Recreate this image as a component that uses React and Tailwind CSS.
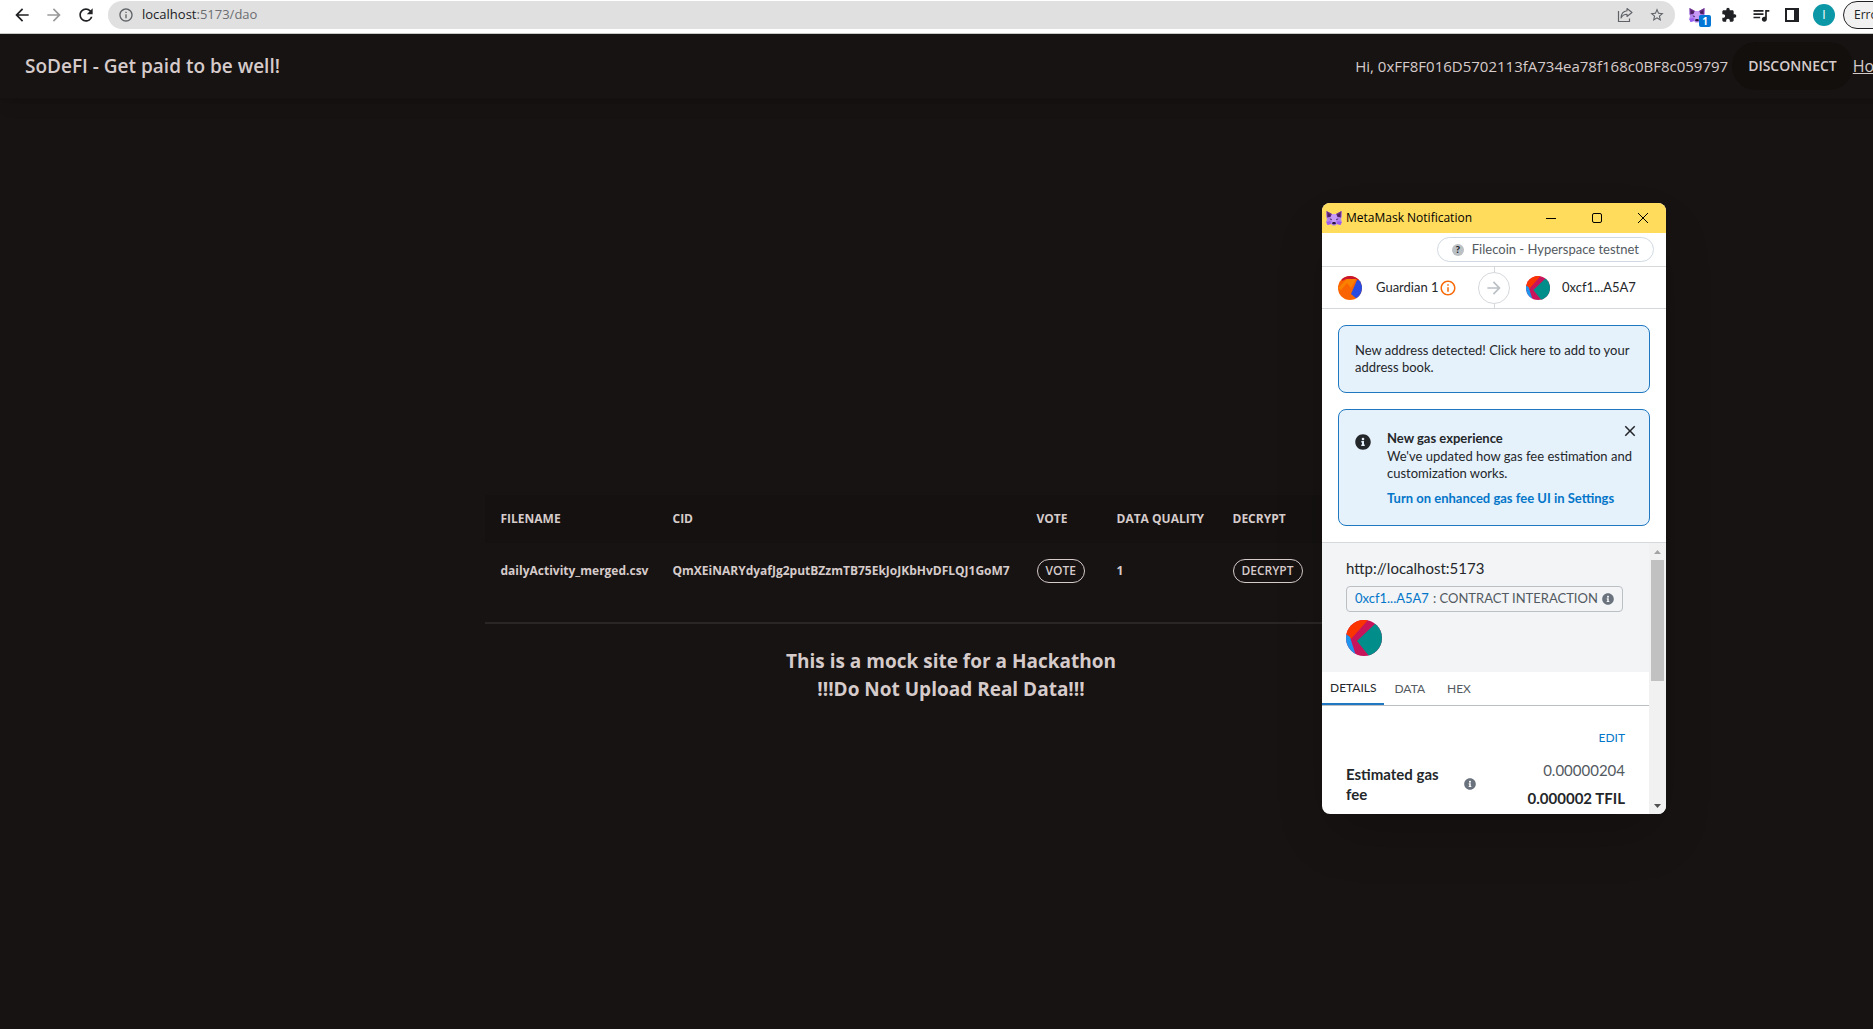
import {
  MdArrowBack,
  MdArrowForward,
  MdRefresh,
  MdInfoOutline,
  MdStarBorder,
  MdExtension,
  MdQueueMusic,
  MdClose,
} from "react-icons/md";
import { FaInfoCircle } from "react-icons/fa";

const files = [
  {
    name: "dailyActivity_merged.csv",
    cid: "QmXEiNARYdyafJg2putBZzmTB75EkJoJKbHvDFLQJ1GoM7",
    quality: 1,
  },
];

const FoxIcon = ({ className }) => (
  <svg viewBox="0 0 16 16" className={className} aria-hidden="true">
    <path d="M.5 1 6 4h4l5.500-3 .3 6-.8 2 .8 3-1.300 3-3.500-1-1.500 1.500h-3L5 14l-3.500 1L.2 12 1 9 .2 7z" fill="#b184ee" />
    <path d="M.5 1 6 4 4.500 7 1 7.500zM15.500 1 10 4l1.500 3 3.500.5z" fill="#6b2f86" />
    <path d="M2 3.500 5 5 4 6.500 2 7zM14 3.500 11 5l1 1.500 2 .5z" fill="#4a1f5e" />
    <path d="M6 4h4l1.500 4-2 4h-3l-2-4z" fill="#c79af6" />
    <path d="M.2 12 4.500 11 5 14l-3.500 1zM15.800 12l-4.300-1-.5 3 3.500 1z" fill="#9a5cf0" />
    <path d="M3.500 8.500 6 9l-.8 1.200zM12.500 8.500 10 9l.8 1.200z" fill="#3a1a50" />
    <path d="M6 13.500 6.800 12h2.400l.8 1.500-1 .8H7z" fill="#2c1640" />
  </svg>
);

const GuardianAvatar = ({ className }) => (
  <svg viewBox="0 0 24 24" className={className} aria-hidden="true">
    <clipPath id="guardian-clip">
      <circle cx="12" cy="12" r="12" />
    </clipPath>
    <g clipPath="url(#guardian-clip)">
      <path d="M0 0h24v24H0z" fill="#fa6400" />
      <path d="M0 12 9 3l9 0-5 9-4-5-6 7z" fill="#fa8000" />
      <path d="M3 0h18v5l-3-2H8L4 5z" fill="#c8142f" />
      <path d="M19 4l6 1v19h-5l-7-6z" fill="#2a4be0" />
    </g>
  </svg>
);

const ContractAvatar = ({ id, className }) => (
  <svg viewBox="0 0 36 36" className={className} aria-hidden="true">
    <clipPath id={id}>
      <circle cx="18" cy="18" r="18" />
    </clipPath>
    <g clipPath={`url(#${id})`}>
      <path d="M0 0h36v36H0z" fill="#c8145b" />
      <path d="M0 0h22L5 19 0 14z" fill="#fb3500" />
      <path d="M0 14l4 3 6 19H0z" fill="#1e96f0" />
      <path d="M30 3 11 21l12 15h13V3z" fill="#018e8b" />
    </g>
  </svg>
);

const BrowserBar = () => (
  <div className="flex h-[34px] shrink-0 items-start overflow-hidden border-b border-[#c9cbc7] bg-white pl-3 pt-px text-[#202124]">
    <div className="flex h-7 items-center gap-3">
      <button aria-label="Back">
        <MdArrowBack className="size-5" />
      </button>
      <button aria-label="Forward" className="text-[#9a9a9a]">
        <MdArrowForward className="size-5" />
      </button>
      <button aria-label="Reload">
        <MdRefresh className="size-5" />
      </button>
    </div>
    <div className="ml-3 flex h-7 flex-1 items-center gap-2 rounded-full bg-[#e0e0e0] pl-2.5 pr-2.5">
      <MdInfoOutline className="size-4 text-[#5f6368]" />
      <span className="flex-1 text-[13px] text-[#6b6e72]">
        <span className="text-[#202124]">localhost</span>:5173/dao
      </span>
      <button aria-label="Share">
        <svg viewBox="0 0 16 16" className="size-4 fill-none stroke-[#5f6368]">
          <path d="M1.500 4v10.500h11v-3" strokeWidth="1.200" />
          <path d="M10 1.500l5 4-5 4V7.300C7 7.300 5.300 8.500 4 11c.2-4 2.500-6.800 6-7.200z" strokeWidth="1.100" strokeLinejoin="round" />
        </svg>
      </button>
      <button aria-label="Bookmark" className="ml-2">
        <MdStarBorder className="size-4 text-[#5f6368]" />
      </button>
    </div>
    <div className="flex h-7 w-[198px] shrink-0 items-center gap-4 pl-3.5">
      <button aria-label="MetaMask" className="relative">
        <FoxIcon className="size-4" />
        <span className="absolute -right-1.5 top-2 flex size-3 items-center justify-center rounded-xs bg-[#0376d6] text-[10px] font-bold text-white">
          1
        </span>
      </button>
      <button aria-label="Extensions">
        <MdExtension className="size-4" />
      </button>
      <button aria-label="Media">
        <MdQueueMusic className="-mx-0.5 size-5" />
      </button>
      <button aria-label="Side panel">
        <svg viewBox="0 0 14 14" className="size-3.5">
          <path d="M0 0h14v14H0zM2 2v10h7V2z" fill="#202124" fillRule="evenodd" />
        </svg>
      </button>
      <button className="-ml-0.5 flex size-[22px] shrink-0 items-center justify-center rounded-full bg-[#0b97a5] text-xs text-white">
        I
      </button>
      <button className="-ml-2 h-7 shrink-0 rounded-full border border-[#202124] bg-[#f1f1f1] px-2.5 text-xs">
        Error
      </button>
    </div>
  </div>
);

const Navbar = () => (
  <header className="flex h-16 w-[calc(100%+29px)] shrink-0 items-center pl-[25px] pr-1 shadow-lg">
    <h1 className="flex-1 text-[19px] font-semibold">SoDeFI - Get paid to be well!</h1>
    <span className="text-[15px]">Hi, 0xFF8F016D5702113fA734ea78f168c0BF8c059797</span>
    <button className="ml-1 h-12 rounded-full bg-[#120f0d] px-4 text-sm font-semibold">
      DISCONNECT
    </button>
    <a href="#home" className="text-base underline">
      Home
    </a>
  </header>
);

const FileTable = () => (
  <table className="w-[933px] table-fixed text-left text-xs font-bold">
    <colgroup>
      <col className="w-[172px]" />
      <col className="w-[364px]" />
      <col className="w-20" />
      <col className="w-[116px]" />
      <col className="w-[100px]" />
      <col />
    </colgroup>
    <thead>
      <tr className="h-12 bg-[#141110]">
        <th className="px-4">FILENAME</th>
        <th className="px-4">CID</th>
        <th className="px-4">VOTE</th>
        <th className="whitespace-nowrap px-4">DATA QUALITY</th>
        <th className="px-4">DECRYPT</th>
        <th></th>
      </tr>
    </thead>
    <tbody>
      {files.map((file) => (
        <tr key={file.cid} className="h-14">
          <td className="px-4">{file.name}</td>
          <td className="px-4">{file.cid}</td>
          <td className="px-4">
            <button className="block h-6 rounded-full border border-[#d6cbcb] px-2 font-semibold">VOTE</button>
          </td>
          <td className="px-4">{file.quality}</td>
          <td className="px-4">
            <button className="block h-6 rounded-full border border-[#d6cbcb] px-2 font-semibold">DECRYPT</button>
          </td>
          <td></td>
        </tr>
      ))}
    </tbody>
  </table>
);

const TitleBar = () => (
  <div className="flex h-[30px] items-center bg-[#ffdc5c] pl-1 pr-[18px] text-black">
    <FoxIcon className="size-4" />
    <span className="ml-1 flex-1 font-['Open_Sans',sans-serif] text-xs">MetaMask Notification</span>
    <div className="flex items-center gap-9">
      <button aria-label="Minimize">
        <svg viewBox="0 0 10 10" className="size-2.5 stroke-black">
          <path d="M0 5.500h10" />
        </svg>
      </button>
      <button aria-label="Maximize">
        <svg viewBox="0 0 10 10" className="size-2.5 fill-none stroke-black">
          <rect x="0.500" y="0.500" width="9" height="9" rx="1.500" />
        </svg>
      </button>
      <button aria-label="Close">
        <svg viewBox="0 0 10 10" className="size-2.5 stroke-black">
          <path d="M0 0l10 10M10 0L0 10" />
        </svg>
      </button>
    </div>
  </div>
);

const Accounts = () => (
  <div className="relative flex h-[43px] items-center border-y border-[#d6d9dc] text-[13px]">
    <div className="flex w-1/2 items-center pl-4">
      <GuardianAvatar className="size-6" />
      <span className="ml-3.5">Guardian 1</span>
      <MdInfoOutline className="size-[18px] text-[#f66a0a]" />
    </div>
    <div className="flex w-1/2 items-center pl-8">
      <ContractAvatar id="recipient-clip" className="size-6" />
      <span className="ml-3">0xcf1...A5A7</span>
    </div>
    <div className="absolute inset-y-0 left-1/2 flex w-8 -translate-x-1/2 items-center justify-center">
      <span className="absolute inset-y-0 left-1/2 w-px bg-[#d6d9dc]" />
      <span className="relative flex size-8 items-center justify-center rounded-full border border-[#d6d9dc] bg-white">
        <MdArrowForward className="size-5 stroke-[#bbc0c5] text-[#bbc0c5]" />
      </span>
    </div>
  </div>
);

const MetaMaskWindow = () => (
  <section className="absolute right-[207px] top-[203px] w-[344px] overflow-hidden rounded-lg bg-white font-[Lato,sans-serif] text-[#24272a] shadow-2xl">
    <TitleBar />
    <div className="flex h-[33px] items-center justify-end pr-3">
      <button className="flex h-[25px] items-center gap-2 rounded-full border border-[#d0d9e2] px-3.5 text-[13px] text-[#535a61]">
        <span className="flex size-3 items-center justify-center rounded-full bg-[#bbc0c5] text-[10px] font-black text-[#24272a]">
          ?
        </span>
        Filecoin - Hyperspace testnet
      </button>
    </div>
    <Accounts />

    <div className="space-y-4 p-4">
      <div className="rounded-lg border border-[#1f78c1] bg-[#e5f1fb] p-4 text-[13px] leading-[17px]">
        New address detected! Click here to add to your address book.
      </div>
      <div className="relative flex rounded-lg border border-[#1f78c1] bg-[#e5f1fb] px-4 py-[18px] text-[13px] leading-[17px]">
        <FaInfoCircle className="mt-1.5 size-4 shrink-0" />
        <div className="ml-4 flex-1">
          <h2 className="font-bold leading-5">New gas experience</h2>
          <p>We've updated how gas fee estimation and customization works.</p>
          <a href="#settings" className="mt-2 block font-bold text-[#0376c9]">
            Turn on enhanced gas fee UI in Settings
          </a>
        </div>
        <button aria-label="Dismiss" className="absolute right-2.5 top-3">
          <MdClose className="size-[18px] stroke-current" />
        </button>
      </div>
    </div>

    <div className="flex h-[272px] border-t border-[#d6d9dc]">
      <div className="min-w-0 flex-1 overflow-hidden">
        <div className="bg-[#f2f4f6] px-6 pb-4 pt-[15px]">
          <div className="text-[15px] leading-5">http://localhost:5173</div>
          <div className="mt-2 inline-flex h-[26px] items-center rounded border border-[#bbc0c5] px-2 text-[13px] text-[#535a61]">
            <span className="text-[#0376c9]">0xcf1...A5A7</span>
            <span className="ml-1">: CONTRACT INTERACTION</span>
            <FaInfoCircle className="ml-1 size-3 text-[#6a737d]" />
          </div>
          <ContractAvatar id="contract-clip" className="mt-2 size-9" />
        </div>
        <div className="flex h-[34px] border-b border-[#bbc0c5] text-xs text-[#535a61]">
          <button className="border-b-2 border-[#1f78c1] px-2 text-[#24272a]">DETAILS</button>
          <button className="px-2.5">DATA</button>
          <button className="px-3">HEX</button>
        </div>
        <div className="px-6 pt-6">
          <button className="ml-auto block text-xs text-[#0376c9]">EDIT</button>
          <div className="mt-2.5 flex items-center">
            <h3 className="w-28 text-[15px] font-bold leading-5">Estimated gas fee</h3>
            <FaInfoCircle className="ml-1.5 size-3 text-[#6a737d]" />
            <div className="flex-1 text-right text-[15px] leading-7">
              <div className="text-[#535a61]">0.00000204</div>
              <div className="font-bold">0.000002 TFIL</div>
            </div>
          </div>
        </div>
      </div>
      <div className="flex w-[17px] flex-col items-center bg-[#f1f1f1]">
        <svg viewBox="0 0 17 17" className="size-[17px]">
          <path d="M5 11l3.500-4 3.500 4z" fill="#a3a3a3" />
        </svg>
        <div className="h-[121px] w-[13px] bg-[#c1c1c1]" />
        <svg viewBox="0 0 17 17" className="mt-auto size-[17px]">
          <path d="M5 7l3.500 4L12 7z" fill="#505050" />
        </svg>
      </div>
    </div>
  </section>
);

const App = () => {
  return (
    <div className="relative flex min-h-screen flex-col overflow-hidden bg-[#171312] font-['Open_Sans',sans-serif] text-[#d6cbcb]">
      <BrowserBar />
      <Navbar />
      <main className="flex w-[calc(100%+29px)] flex-1 flex-col items-center justify-center pt-[70px]">
        <FileTable />
        <div className="my-[23px] h-0.5 w-[933px] bg-[#2a2625]" />
        <p className="text-center text-[19px] font-bold leading-7">
          This is a mock site for a Hackathon
          <br />
          !!!Do Not Upload Real Data!!!
        </p>
      </main>
      <MetaMaskWindow />
    </div>
  );
};

export default App;
